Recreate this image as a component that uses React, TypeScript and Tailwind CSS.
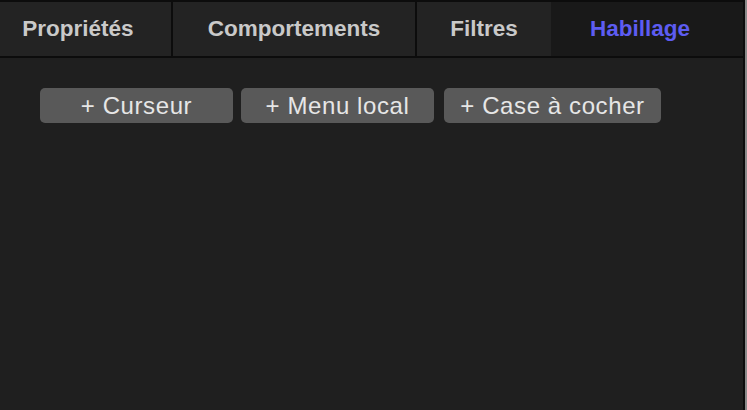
export default function App() {
  const tabs = [
    { label: "Propriétés", cls: "w-[171px] pr-[15px]" },
    { label: "Comportements", cls: "w-[242px]" },
    { label: "Filtres", cls: "w-[134px]" },
  ];
  const buttons = [
    { label: "+ Curseur", cls: "w-[193px]" },
    { label: "+ Menu local", cls: "w-[193px] ml-[8px]" },
    { label: "+ Case à cocher", cls: "w-[217px] ml-[10px]" },
  ];

  return (
    <div
      className="w-[747px] h-[410px] bg-[#1f1f1f] flex flex-col overflow-hidden"
      style={{ fontFamily: '"Liberation Sans", Arial, sans-serif' }}
    >
      <div className="flex flex-1 min-h-0">
        <div className="flex flex-col w-[743px]">
          <div className="flex h-[58px] bg-[#0c0c0c] pt-[2px] pb-[2px] gap-[2px]">
            {tabs.map((t) => (
              <div
                key={t.label}
                className={`${t.cls} bg-[#232323] flex items-center justify-center text-[22.5px] font-bold text-[#c9c9c9]`}
              >
                {t.label}
              </div>
            ))}
            <div className="flex-1 -ml-[2px] bg-[#191919] flex items-center justify-center pr-[14px] text-[22.5px] font-bold text-[#5d5cf2]">
              Habillage
            </div>
          </div>
          <div className="flex pl-[40px] pt-[30px]">
            {buttons.map((b) => (
              <div
                key={b.label}
                className={`${b.cls} h-[35px] rounded-[5px] bg-[#595959] flex items-center justify-center text-[24px] text-[#e6e6e6] tracking-[0.6px]`}
              >
                {b.label}
              </div>
            ))}
          </div>
        </div>
        <div className="w-[2px] bg-[#0c0c0c]" />
        <div className="w-[2px] bg-[#8a8a8a]" />
      </div>
    </div>
  );
}
